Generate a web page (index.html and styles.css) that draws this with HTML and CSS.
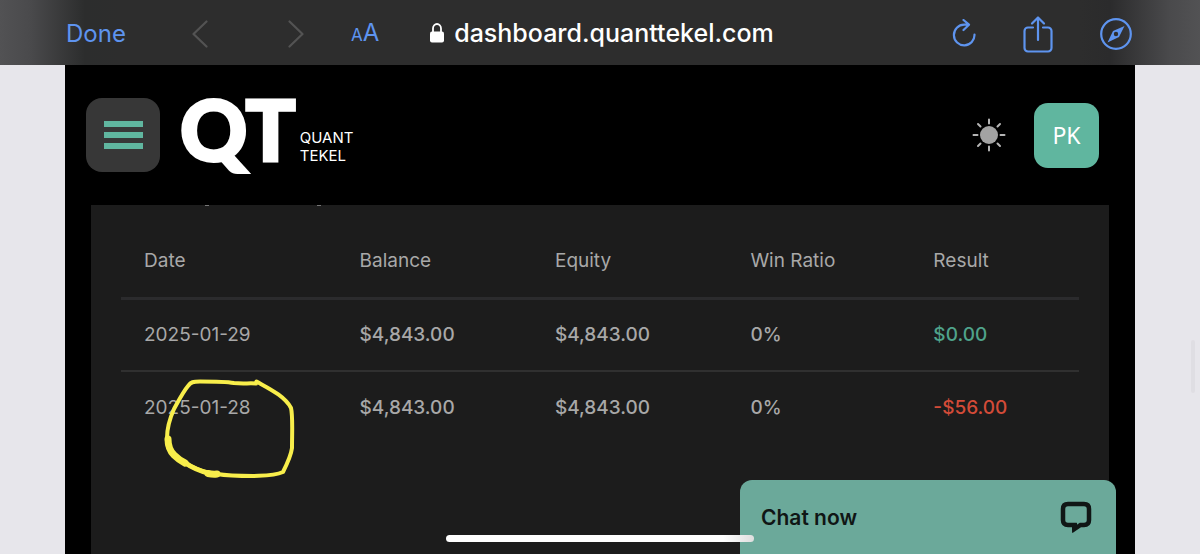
FILE: index.html
```html
<!DOCTYPE html>
<html lang="en">
<head>
  <meta charset="UTF-8" />
  <meta name="viewport" content="width=device-width, initial-scale=1" />
  <title>Quant Tekel Dashboard</title>
  <link rel="stylesheet" href="styles.css">
</head>
<body>
  <nav class="browser-bar">
    <div class="bar-left">
      <button class="bar-btn done">Done</button>
      <button class="bar-btn back" aria-label="Back">
        <svg width="16" height="28" viewBox="0 0 16 28"><path d="M14.5 1.5 1.5 14l13 12.5" /></svg>
      </button>
      <button class="bar-btn forward" aria-label="Forward">
        <svg width="16" height="28" viewBox="0 0 16 28"><path d="M1.5 1.5 14.5 14l-13 12.5" /></svg>
      </button>
      <button class="bar-btn text-size"><span class="small-a">A</span>A</button>
    </div>
    <div class="address">
      <svg width="14" height="20" viewBox="0 0 14 20"><rect x="0" y="8.500" width="14" height="11" rx="2" fill="#fff" /><path d="M3 9V5.500a4 4.500 0 0 1 8 0V9" fill="none" stroke="#fff" stroke-width="1.800" /></svg>
      <span>dashboard.quanttekel.com</span>
    </div>
    <div class="bar-right">
      <button class="bar-btn" aria-label="Reload">
        <svg width="24" height="30" viewBox="0 0 24 30"><path d="M22.500 15.500A10.300 10.300 0 1 1 12.200 5.700h4.500M11.500 1l5.500 4.700-5.500 5.300" /></svg>
      </button>
      <button class="bar-btn" aria-label="Share">
        <svg width="30" height="38" viewBox="0 0 30 38"><path d="M10 12.500H5a3.500 3.500 0 0 0-3.500 3.500v17A3.500 3.500 0 0 0 5 36.500h20a3.500 3.500 0 0 0 3.500-3.500V16a3.500 3.500 0 0 0-3.500-3.500h-5M15 25V2.500M9 8.500l6-6 6 6" /></svg>
      </button>
      <button class="bar-btn" aria-label="Open in Safari">
        <svg width="32" height="32" viewBox="0 0 32 32"><circle cx="16" cy="16" r="14.800" /><path class="needle" fill-rule="evenodd" d="M24.500 8 19 19l-11.500 5.500L13 13zM16 13.800a2.200 2.200 0 1 0 0 4.400 2.200 2.200 0 0 0 0-4.400z" /></svg>
      </button>
    </div>
  </nav>

  <div class="frame">
    <header class="site-header">
      <button class="menu-btn" aria-label="Menu"><span></span><span></span><span></span></button>
      <div class="logo">
        <span class="logo-mark">QT</span>
        <span class="logo-name">QUANT<br />TEKEL</span>
      </div>
      <button class="theme-btn" aria-label="Toggle theme">
        <svg width="34" height="34" viewBox="0 0 34 34"><circle cx="17" cy="17" r="9" fill="#a3a3a3" /><path d="M17 1.500v4M17 28.500v4M1.500 17h4M28.500 17h4M6 6l2.500 2.500M25.500 25.500 28 28M6 28l2.500-2.500M25.500 8.500 28 6" fill="none" stroke="#b5b5b5" stroke-width="2" stroke-linecap="round" /></svg>
      </button>
      <button class="avatar">PK</button>
    </header>

    <main class="card">
      <!-- tails of the scrolled-away heading -->
      <svg class="heading-tails" width="120" height="1" viewBox="0 0 120 1"><path d="M1 .5h4M113 .5h4" stroke="#777" /></svg>
      <table class="summary">
        <colgroup>
          <col class="col-date"><col class="col-money"><col class="col-money"><col class="col-ratio"><col>
        </colgroup>
        <thead>
          <tr><th>Date</th><th>Balance</th><th>Equity</th><th>Win Ratio</th><th>Result</th></tr>
        </thead>
        <tbody>
          <tr><td class="date">2025-01-29</td><td>$4,843.00</td><td>$4,843.00</td><td>0%</td><td class="gain">$0.00</td></tr>
          <tr><td class="date">2025-01-28</td><td>$4,843.00</td><td>$4,843.00</td><td>0%</td><td class="loss">-$56.00</td></tr>
        </tbody>
      </table>

      <!-- hand-drawn marker around the last date -->
      <svg class="marker" width="136" height="104" viewBox="160 376 136 104">
        <path d="M256.500 381.500C268 388 285 396 291 408c2 8 1 25 1 40-1 8-6 18-9 24-9 4-20 3.500-30 4-15 0-30-1-36-2-10 0-20-4-34-12-11-6-17-14-16-24 0-9 3-20 7-29 5-9 9-17 14-23 3-4 5-4.500 12-4.500 16 0 25 0 34 1.500 8 1 15 0 22 .5" />
        <path class="thick" d="M168 439c0 7 2 12 6 16 3 3 7 6 11 8" />
        <path class="thick" d="M208 473.500q5 1 9 .5" />
        <path class="medium" d="M184 462c7 5 15 9 26 11.500" />
      </svg>
    </main>
  </div>

  <div class="scroll-thumb"></div>
  <button class="chat">
    <span>Chat now</span>
    <svg width="32" height="32" viewBox="0 0 32 32"><path d="M8 3h16q5 0 5 5v11q0 5-5 5h-3.500L14.500 28v-4H8q-5 0-5-5V8q0-5 5-5z" fill="none" stroke="#101615" stroke-width="4.500" /><path d="M12 22h5v4l-5 5.500z" fill="#101615" /></svg>
  </button>
  <div class="home-indicator"></div>
</body>
</html>
```
FILE: styles.css
```css
* {
  box-sizing: border-box;
}
body {
  margin: 0;
  height: 100vh;
  display: flex;
  flex-direction: column;
  overflow: hidden;
  background: #e7e6eb;
  font-family: Inter, "Liberation Sans", sans-serif;
}
button {
  padding: 0;
  border: none;
  background: none;
  font-family: inherit;
  cursor: pointer;
}
svg {
  display: block;
}

/* browser toolbar */
.browser-bar {
  flex: none;
  height: 65px;
  padding: 0 68px 0 66px;
  display: grid;
  grid-template-columns: 1fr auto 1fr;
  align-items: center;
  background: linear-gradient(90deg, #525254 0, #4a4a4c 30px, #2c2d2d 85px, #2d2d2d 120px, #2d2d2d calc(100% - 120px), #2b2b2c calc(100% - 90px), #4a4a4c calc(100% - 30px), #525254 100%);
}
.bar-left, .bar-right, .address {
  display: flex;
  align-items: center;
}
.bar-left, .bar-right {
  padding-top: 2px;
}
.bar-right {
  justify-content: flex-end;
  gap: 47px;
}
.bar-btn {
  color: #5e94ef;
  font-size: 24px;
  line-height: 30px;
}
.bar-btn svg {
  fill: none;
  stroke: #5e94ef;
  stroke-width: 2.2;
  stroke-linecap: round;
  stroke-linejoin: round;
}
.bar-btn .needle {
  fill: #5e94ef;
  stroke: none;
}
.back {
  margin-left: 66px;
}
.forward {
  margin-left: 80px;
}
.back svg, .forward svg {
  stroke: #535353;
}
.text-size {
  margin-left: 47px;
}
.small-a {
  font-size: 17px;
}
.address {
  gap: 10px;
  padding-left: 6px;
  color: #fff;
  font-size: 25px;
  font-weight: 500;
  line-height: 30px;
}

/* dashboard */
.frame {
  flex: 1;
  margin: 0 65px;
  display: flex;
  flex-direction: column;
  background: #000;
}
.site-header {
  height: 140px;
  padding: 0 36px 0 21px;
  display: flex;
  align-items: center;
}
.menu-btn {
  width: 74px;
  height: 74px;
  border-radius: 16px;
  background: #373737;
  display: flex;
  flex-direction: column;
  align-items: center;
  justify-content: center;
  gap: 5px;
}
.menu-btn span {
  width: 39px;
  height: 6px;
  background: #60b69f;
}
.logo {
  margin-left: 20px;
  margin-right: auto;
  padding-bottom: 12px;
  display: flex;
  align-items: flex-end;
  gap: 4px;
  color: #fff;
}
.logo-mark {
  font-family: Lato, sans-serif;
  font-size: 83px;
  font-weight: 900;
  line-height: 80px;
  -webkit-text-stroke: 3px #fff;
}
.logo-name {
  padding-bottom: 4px;
  font-size: 15px;
  line-height: 18px;
}
.theme-btn {
  margin-right: 28px;
}
.avatar {
  width: 65px;
  height: 65px;
  border-radius: 14px;
  background: #60b69f;
  color: #fff;
  font-family: "Noto Sans", sans-serif;
  font-size: 23px;
}
.card {
  position: relative;
  flex: 1;
  margin: 0 26px;
  padding: 20px 30px 0;
  background: #1c1c1c;
}
.heading-tails {
  position: absolute;
  left: 113px;
  top: 0;
}
.summary {
  width: 100%;
  table-layout: fixed;
  border-collapse: collapse;
  color: #a8a8a8;
  font-size: 19px;
  line-height: 24px;
  text-align: left;
}
.col-date {
  width: 22.5%;
}
.col-money {
  width: 20.4%;
}
.col-ratio {
  width: 19.1%;
}
.summary th, .summary td {
  height: 73px;
  padding: 0 23px;
}
.summary th {
  font-weight: 400;
  border-bottom: 3px solid #2b2b2d;
}
.summary td {
  font-weight: 500;
}
.summary tbody tr:first-child td {
  border-bottom: 2px solid #303030;
}
.summary .date {
  font-weight: 400;
}
.summary .gain {
  color: #4fa38b;
}
.summary .loss {
  color: #d34b38;
}
.marker {
  position: absolute;
  left: 69px;
  top: 171px;
  fill: none;
  stroke: #f8ee4b;
  stroke-width: 4;
  stroke-linecap: round;
  stroke-linejoin: round;
}
.marker .medium {
  stroke-width: 5;
}
.marker .thick {
  stroke-width: 7;
}

/* overlays */
.scroll-thumb {
  position: fixed;
  right: 5px;
  top: 340px;
  width: 4px;
  height: 53px;
  border-radius: 2px;
  background: #dfdee3;
}
.chat {
  position: fixed;
  right: 84px;
  bottom: 0;
  width: 376px;
  height: 74px;
  padding: 0 24px 0 21px;
  border-radius: 12px 12px 0 0;
  background: #6ba99a;
  display: flex;
  align-items: center;
  justify-content: space-between;
  color: #101615;
  font-size: 21px;
  font-weight: 600;
}
.home-indicator {
  position: fixed;
  left: 50%;
  bottom: 12px;
  width: 308px;
  height: 7px;
  margin-left: -154px;
  border-radius: 4px;
  background: linear-gradient(90deg, #fff 90%, #dedede);
}
```
